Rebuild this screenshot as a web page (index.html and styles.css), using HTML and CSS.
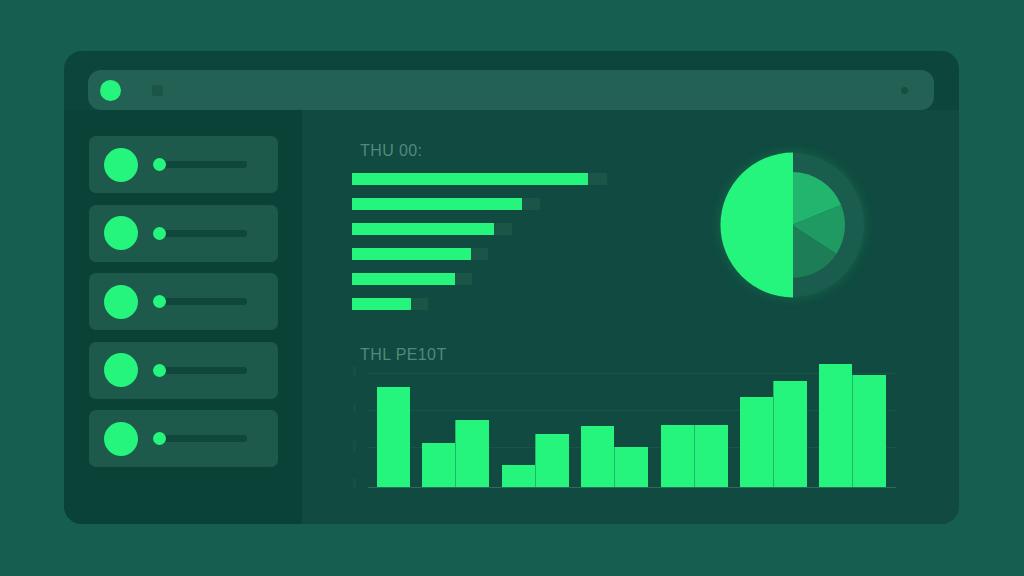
FILE: index.html
```html
<!DOCTYPE html>
<html>
<head>
<meta charset="utf-8">
<link rel="stylesheet" href="styles.css">
</head>
<body>
<div class="window">
  <div class="topbar">
    <span class="dot"></span>
    <span class="square"></span>
    <span class="spacer"></span>
    <span class="mini"></span>
  </div>
  <div class="body">
    <aside class="sidebar">
      <div class="card"><span class="avatar"></span><span class="track"></span></div>
      <div class="card"><span class="avatar"></span><span class="track"></span></div>
      <div class="card"><span class="avatar"></span><span class="track"></span></div>
      <div class="card"><span class="avatar"></span><span class="track"></span></div>
      <div class="card"><span class="avatar"></span><span class="track"></span></div>
    </aside>
    <main class="main">
      <section class="top">
        <div class="hbars">
          <div class="title">THU 00:</div>
          <div class="rows">
            <div class="hrow" style="width:255px"><span class="fill" style="width:236px"></span></div>
            <div class="hrow" style="width:188px"><span class="fill" style="width:170px"></span></div>
            <div class="hrow" style="width:160px"><span class="fill" style="width:142px"></span></div>
            <div class="hrow" style="width:136px"><span class="fill" style="width:119px"></span></div>
            <div class="hrow" style="width:120px"><span class="fill" style="width:103px"></span></div>
            <div class="hrow" style="width:76px"><span class="fill" style="width:59px"></span></div>
          </div>
        </div>
        <svg class="pie" width="146" height="146" viewBox="-73 -73 146 146">
          <circle cx="0" cy="0" r="72" fill="#1a5d4e"/>
          <path d="M0 0 L0 -53 A53 53 0 0 1 49.1 -19.9 Z" fill="#22b56e"/>
          <path d="M0 0 L49.1 -19.9 A53 53 0 0 1 44.4 28.9 Z" fill="#1f9a63"/>
          <path d="M0 0 L44.4 28.9 A53 53 0 0 1 0 53 Z" fill="#1c7d57"/>
          <path d="M1 -72.5 A72.5 72.5 0 0 0 1 72.5 Z" fill="#25f57c"/>
        </svg>
      </section>
      <section class="bottom">
        <div class="title">THL PE10T</div>
        <div class="chartwrap">
          <div class="axis"><span></span><span></span><span></span><span></span></div>
          <div class="chart">
            <div class="group"><span class="bar" style="height:100px"></span></div>
            <div class="group"><span class="bar" style="height:44px"></span><span class="bar" style="height:67px"></span></div>
            <div class="group"><span class="bar" style="height:22px"></span><span class="bar" style="height:53px"></span></div>
            <div class="group"><span class="bar" style="height:61px"></span><span class="bar" style="height:40px"></span></div>
            <div class="group"><span class="bar" style="height:62px"></span><span class="bar" style="height:62px"></span></div>
            <div class="group"><span class="bar" style="height:90px"></span><span class="bar" style="height:106px"></span></div>
            <div class="group"><span class="bar" style="height:123px"></span><span class="bar" style="height:112px"></span></div>
          </div>
        </div>
      </section>
    </main>
  </div>
</div>
</body>
</html>
```
FILE: styles.css
```css
* { box-sizing: border-box; }
html, body { margin: 0; padding: 0; }
body {
  width: 1024px;
  height: 576px;
  background: #165f50;
  padding: 51px 0 0 64px;
  font-family: "Liberation Sans", Arial, sans-serif;
  overflow: hidden;
}
.window {
  width: 895px;
  height: 473px;
  background: #0c463b;
  border-radius: 18px;
  display: flex;
  flex-direction: column;
  overflow: hidden;
}
.topbar {
  margin: 19px 25px 0 24px;
  height: 40px;
  background: #236154;
  border-radius: 13px;
  display: flex;
  align-items: center;
  padding: 0 26px 0 12px;
}
.topbar .dot {
  width: 21px;
  height: 21px;
  border-radius: 50%;
  background: #25f57c;
}
.topbar .square {
  width: 11px;
  height: 11px;
  margin-left: 31px;
  border-radius: 3px;
  background: #1a5547;
}
.topbar .spacer { flex: 1; }
.topbar .mini {
  width: 7px;
  height: 7px;
  border-radius: 50%;
  background: #184e42;
}
.body {
  flex: 1;
  display: flex;
}
.sidebar {
  width: 238px;
  background: #0a4237;
  padding: 26px 24px 0 25px;
  display: flex;
  flex-direction: column;
  gap: 11.5px;
}
.card {
  height: 57px;
  background: #1d5a4c;
  border-radius: 7px;
  display: flex;
  align-items: center;
  padding-left: 15px;
}
.avatar {
  width: 34px;
  height: 34px;
  border-radius: 50%;
  background: #25f57c;
}
.track {
  position: relative;
  margin-left: 15px;
  width: 94px;
  height: 7px;
  border-radius: 3px;
  background: #0f473c;
}
.track::before {
  content: "";
  position: absolute;
  left: 0;
  top: -3px;
  width: 13px;
  height: 13px;
  border-radius: 50%;
  background: #25f57c;
}
.main {
  flex: 1;
  background: #104a40;
  padding: 32px 0 0 50px;
}
.title {
  font-size: 16px;
  line-height: 18px;
  letter-spacing: 0.4px;
  color: #4f8a7c;
  padding-left: 8px;
}
.top {
  display: flex;
  align-items: flex-start;
}
.hbars { width: 256px; }
.rows {
  margin-top: 13px;
  display: flex;
  flex-direction: column;
  gap: 13px;
}
.hrow {
  height: 12px;
  background: #1a5547;
}
.hrow .fill {
  display: block;
  height: 12px;
  background: #25f57c;
}
.pie {
  display: block;
  margin-left: 111px;
  margin-top: 10px;
  filter: drop-shadow(0 0 6px rgba(37, 245, 124, 0.18));
}
.bottom { margin-top: 36px; }
.chartwrap {
  margin-top: -2px;
  display: flex;
  align-items: flex-end;
}
.axis {
  width: 16px;
  height: 126px;
  display: flex;
  flex-direction: column;
  justify-content: space-between;
  align-items: flex-start;
  padding: 4px 0 0 1px;
}
.axis span {
  width: 3px;
  height: 10px;
  background: #164f43;
}
.chart {
  width: 528px;
  height: 126px;
  border-bottom: 1px solid #2c6c5a;
  padding-left: 9px;
  display: flex;
  align-items: flex-end;
  gap: 12.4px;
  background-image:
    linear-gradient(#16554a, #16554a),
    linear-gradient(#16554a, #16554a),
    linear-gradient(#16554a, #16554a);
  background-size: 100% 1px;
  background-repeat: no-repeat;
  background-position: 0 11px, 0 48px, 0 85px;
}
.group {
  display: flex;
  align-items: flex-end;
}
.bar {
  width: 33px;
  background: #25f57c;
}
.bar + .bar {
  width: 34px;
  border-left: 1px solid #1db866;
}
```
